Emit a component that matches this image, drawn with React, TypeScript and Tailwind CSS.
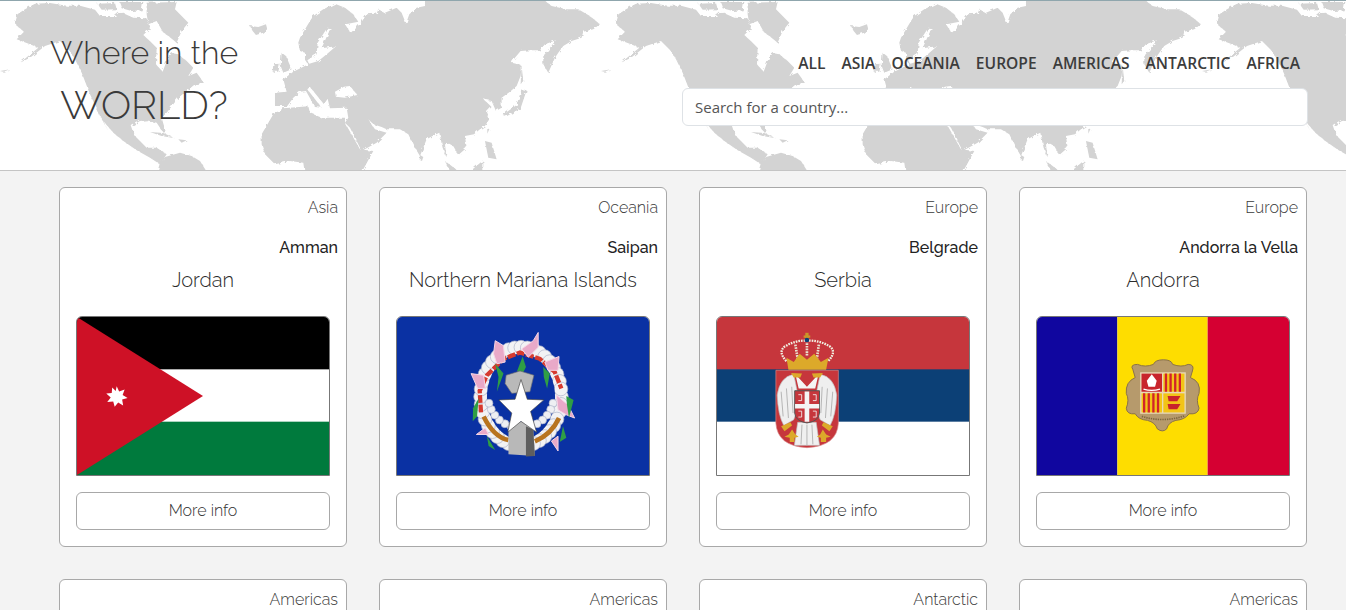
const NAV = ["ALL", "ASIA", "OCEANIA", "EUROPE", "AMERICAS", "ANTARCTIC", "AFRICA"];

const THIN = "font-['Raleway','Inter','Lato',sans-serif] font-light";

const WorldMap = () => (
  <svg className="absolute inset-0 h-full w-full" aria-hidden="true">
    <defs>
      {/* roughens the coastlines a little */}
      <filter id="coast" filterUnits="userSpaceOnUse" x="0" y="0" width="1803" height="516">
        <feTurbulence type="fractalNoise" baseFrequency="0.09" numOctaves="2" seed="4" />
        <feDisplacementMap in="SourceGraphic" scale="12" />
      </filter>
      <pattern id="tile" width="601" height="172" patternUnits="userSpaceOnUse">
        <g fill="#d3d3d3" transform="scale(0.3333)" filter="url(#coast)">
          {/* north america */}
          <path d="M52,40 L75,25 L105,8 L150,6 L200,14 L240,14 L285,26 L300,45 L345,45 L360,32 L400,50 L440,52 L450,82 L430,102 L452,122 L470,140 L468,190 L488,212 L500,180 L510,155 L535,160 L560,180 L580,200 L565,225 L590,215 L612,245 L585,250 L560,270 L535,290 L520,310 L500,335 L485,350 L498,395 L488,392 L470,365 L440,358 L420,360 L395,375 L405,405 L420,420 L440,440 L470,440 L500,460 L480,490 L450,470 L410,448 L370,420 L340,395 L310,360 L325,390 L300,345 L270,280 L245,215 L225,175 L210,150 L180,120 L135,135 L90,170 L60,185 L115,140 L90,130 L50,115 L72,92 L45,70 Z" />
          <path d="M440,5 L530,3 L525,25 L565,65 L545,90 L530,125 L505,105 L490,95 L470,60 L445,70 L440,40 Z" />
          <path d="M292,8 L345,6 L350,25 L305,26 Z" />
          <path d="M358,3 L430,3 L425,28 L395,30 L365,22 Z" />
          <path d="M0,210 L30,205 L10,212 Z" />
          {/* south america, caribbean */}
          <path d="M470,520 L480,485 L495,468 L540,455 L575,465 L600,480 L625,520 Z" />
          <path d="M450,393 L490,396 L525,412 L485,405 Z" />
          <path d="M535,415 L560,418 L545,425 Z" />
          {/* iceland */}
          <path d="M750,75 L775,78 L798,70 L802,85 L785,97 L768,102 L758,90 Z" />
          <g transform="translate(750,0)">
            {/* eurasia */}
            <path d="M145,125 L150,110 L180,60 L190,45 L220,25 L255,8 L285,20 L310,40 L325,62 L295,68 L285,70 L302,95 L318,82 L335,62 L350,40 L380,38 L385,25 L405,35 L440,20 L455,35 L468,68 L478,40 L500,20 L525,15 L525,-5 L880,-5 L905,15 L950,25 L985,25 L1020,45 L1050,70 L1030,85 L1000,92 L995,110 L965,120 L940,135 L925,155 L915,170 L895,215 L880,190 L880,165 L900,140 L918,118 L885,130 L870,148 L840,148 L812,150 L795,170 L785,185 L805,190 L815,195 L812,225 L800,255 L780,272 L755,290 L755,320 L738,330 L725,300 L700,295 L712,305 L722,315 L708,330 L718,355 L705,375 L690,385 L672,400 L645,405 L650,440 L625,462 L610,435 L598,428 L585,430 L590,470 L578,440 L568,395 L548,405 L530,415 L510,465 L495,440 L475,400 L450,385 L410,385 L395,378 L370,370 L355,355 L375,385 L410,395 L380,425 L335,450 L300,380 L285,365 L295,350 L290,320 L240,322 L233,293 L222,310 L180,258 L172,265 L215,320 L195,318 L168,270 L150,272 L130,290 L112,315 L75,315 L75,275 L110,272 L100,235 L130,212 L175,190 L165,175 L165,155 L150,150 Z" />
            {/* africa */}
            <path d="M35,400 L70,340 L100,322 L175,316 L180,335 L215,350 L285,350 L285,365 L330,445 L370,450 L340,505 L335,520 L165,520 L160,485 L120,480 L75,490 L45,460 L35,430 Z" />
            {/* uk */}
            <path d="M95,155 L108,165 L125,205 L100,215 L92,195 Z" />
            <path d="M70,190 L90,188 L85,212 L68,212 Z" />
            {/* japan, islands */}
            <path d="M758,342 L800,312 L815,265 L830,268 L812,322 L770,346 Z" />
            <path d="M585,480 L625,510 L605,520 Z" />
            <path d="M650,520 L700,478 L700,520 Z" />
            <path d="M705,420 L725,425 L740,475 L715,470 Z" />
            <path d="M510,462 L520,468 L516,480 L509,476 Z" />
            <path d="M712,382 L718,385 L712,398 Z" />
            <path d="M815,195 L820,240 L812,250 Z" />
            {/* seas */}
            <g fill="#fff">
              <path d="M255,272 L282,257 L300,255 L322,282 L285,290 L258,287 Z" />
              <path d="M232,80 L242,82 L222,125 L215,142 L258,136 L232,158 L205,180 L178,188 L172,178 L200,160 L203,125 Z" />
            </g>
          </g>
        </g>
      </pattern>
    </defs>
    <rect width="100%" height="100%" fill="url(#tile)" />
  </svg>
);

const Jordan = () => (
  <svg viewBox="0 0 254 160" preserveAspectRatio="none" className="block h-full w-full">
    <rect width="254" height="54" fill="#000" />
    <rect y="53" width="254" height="54" fill="#fff" />
    <rect y="106" width="254" height="54" fill="#007a3d" />
    <path d="M0,0 L127,80 L0,160 Z" fill="#ce1126" />
    <path
      d="M40,70 L42.500,75.500 L48,73.500 L46,79 L51,82 L45.500,83.500 L46.500,89.500 L41.500,86.500 L38,91 L36.500,85.500 L30.500,86 L34,81.500 L29.500,77.500 L35,77 L35.500,71.500 L39,75 Z"
      fill="#fff"
    />
  </svg>
);

const Mariana = () => {
  const outer = Array.from({ length: 40 }, (_, i) => (i * Math.PI * 2) / 40);
  const lower = Array.from({ length: 14 }, (_, i) => Math.PI * (0.08 + (i * 0.84) / 13));
  return (
    <svg viewBox="0 0 254 160" preserveAspectRatio="none" className="block h-full w-full">
      <rect width="254" height="160" fill="#0a31a3" />
      <g transform="translate(44,4) scale(0.3333)">
        {outer.map((a, i) => (
          <circle
            key={i}
            cx={243 + 122 * Math.cos(a)}
            cy={230 + 150 * Math.sin(a)}
            r="21"
            fill="#f2f2f4"
            stroke="#a9b0c8"
            strokeWidth="2"
          />
        ))}
        <ellipse cx="243" cy="230" rx="103" ry="130" fill="#0a31a3" />
        <path d="M122,278 L118,212 L140,165 L190,115 L240,96 L300,115 L345,155 L365,205" fill="none" stroke="#d63a2f" strokeWidth="13" strokeDasharray="24 5" />
        <path d="M130,290 Q160,352 205,362" fill="none" stroke="#b8741f" strokeWidth="14" />
        <path d="M285,366 Q335,345 358,295" fill="none" stroke="#b8741f" strokeWidth="14" />
        {lower.map((a, i) => (
          <circle
            key={i}
            cx={243 + 100 * Math.cos(a)}
            cy={225 + 100 * Math.sin(a)}
            r="12"
            fill="#eeeff3"
            stroke="#a9b0c8"
            strokeWidth="2"
          />
        ))}
        <g fill="#e9a9c8" stroke="#f6d7e6" strokeWidth="3">
          <path d="M165,60 L190,75 L195,125 L170,130 L160,100 Z" />
          <path d="M295,35 L295,80 L265,110 L245,85 L280,60 Z" />
          <path d="M358,108 L355,150 L325,150 L315,125 Z" />
          <path d="M92,160 L130,165 L135,205 L112,205 Z" />
          <path d="M350,225 L385,255 L405,295 L380,285 L355,270 Z" />
          <path d="M108,345 L135,325 L145,345 Z" />
          <path d="M335,365 L355,350 L355,395 Z" />
        </g>
        <g fill="#2f9e45">
          <path d="M165,130 L190,160 L170,215 L175,170 Z" />
          <path d="M248,108 L258,140 L240,175 L232,150 Z" />
          <path d="M310,140 L330,160 L322,205 L312,170 Z" />
          <path d="M115,235 L110,290 L97,305 L98,265 Z" />
          <path d="M380,228 L402,240 L388,295 L382,255 Z" />
          <path d="M140,350 L165,392 L145,380 Z" />
          <path d="M370,320 L380,355 L360,368 Z" />
        </g>
        <path d="M198,165 L240,152 L282,165 L270,215 L215,220 L195,190 Z" fill="#b9b9b9" stroke="#6f6f6f" strokeWidth="2" />
        <path d="M205,320 L245,305 L280,330 L285,410 L205,405 Z" fill="#b8b8b8" />
        <path d="M258,320 L280,330 L285,410 L258,412 Z" fill="#5e5e5e" />
        <path
          d="M243,178 L262,238 L312,240 L272,275 L290,338 L243,305 L203,338 L215,280 L176,240 L225,238 Z"
          fill="#fff"
          stroke="#444"
          strokeWidth="2"
        />
      </g>
    </svg>
  );
};

const Serbia = () => (
  <svg viewBox="0 0 254 160" preserveAspectRatio="none" className="block h-full w-full">
    <rect width="254" height="54" fill="#c6363c" />
    <rect y="53" width="254" height="54" fill="#0c4076" />
    <rect y="106" width="254" height="54" fill="#fff" />
    <g transform="translate(44,4) scale(0.3333)">
      {/* crown */}
      <path d="M62,92 Q95,58 140,60 Q190,58 220,92 L205,125 L78,125 Z" fill="#c6363c" />
      <path d="M78,122 Q52,95 72,78 Q105,58 140,60 Q178,58 210,78 Q230,95 204,122" fill="none" stroke="#f1eee0" strokeWidth="7" strokeDasharray="5 3" />
      <path d="M105,72 L112,115 M140,60 L140,105 M176,72 L170,115" stroke="#e8e2cf" strokeWidth="8" strokeDasharray="5 3" />
      <path d="M78,112 L100,125 L118,100 L140,118 L162,100 L182,125 L205,112 L198,148 L84,148 Z" fill="#dca92a" />
      <rect x="135" y="36" width="10" height="24" fill="#c9962a" />
      <rect x="130" y="44" width="20" height="7" fill="#c9962a" />
      <circle cx="140" cy="58" r="7" fill="#0c4076" />
      <path d="M46,150 L235,150 L235,310 Q232,380 140,385 Q50,380 46,310 Z" fill="#c6363c" stroke="#d98a8a" strokeWidth="2" />
      {/* eagle */}
      <path d="M100,162 Q58,170 50,225 Q52,285 70,318 L100,300 L118,250 Z" fill="#efefef" stroke="#bcbcbc" strokeWidth="2" />
      <path d="M180,162 Q222,170 230,225 Q228,285 210,318 L180,300 L162,250 Z" fill="#efefef" stroke="#bcbcbc" strokeWidth="2" />
      <path d="M62,215 L68,290 M78,205 L84,295 M94,200 L98,280 M218,215 L212,290 M202,205 L196,295 M186,200 L182,280" stroke="#b5b5b5" strokeWidth="3" />
      <path d="M105,162 L140,200 L175,162 L165,205 L115,205 Z" fill="#f5f5f5" />
      <path d="M92,158 L125,160 L120,172 L100,172 Z" fill="#dca92a" />
      <path d="M188,158 L155,160 L160,172 L180,172 Z" fill="#dca92a" />
      <path d="M112,308 L168,308 L178,378 L102,378 Z" fill="#f0f0f0" stroke="#bcbcbc" strokeWidth="2" />
      <path d="M125,315 L122,375 M140,315 L140,378 M155,315 L158,375" stroke="#b5b5b5" strokeWidth="3" />
      <path d="M103,212 L178,212 L178,280 Q176,305 140,310 Q105,305 103,280 Z" fill="#c6363c" stroke="#555" strokeWidth="3" />
      <path d="M133,214 L147,214 L147,252 L177,252 L177,266 L147,266 L147,306 L133,306 L133,266 L104,266 L104,252 L133,252 Z" fill="#f4f4f4" />
      <g fill="none" stroke="#f4f4f4" strokeWidth="2.500">
        <path d="M114,224 h10 v18 h-10 M158,224 h10 v18 h-10 M114,274 h10 v18 h-10 M158,274 h10 v18 h-10" />
      </g>
      <g fill="#dca92a">
        <path d="M95,330 L105,345 L115,352 L102,355 L102,368 L88,368 L88,355 L72,352 L85,345 Z" />
        <path d="M188,330 L198,345 L212,352 L198,355 L198,368 L182,368 L182,355 L170,352 L180,345 Z" />
        <path d="M62,320 L90,308 L95,318 L72,335 Z" />
        <path d="M218,320 L190,308 L185,318 L208,335 Z" />
      </g>
    </g>
  </svg>
);

const Andorra = () => (
  <svg viewBox="0 0 254 160" preserveAspectRatio="none" className="block h-full w-full">
    <rect width="81" height="160" fill="#10069f" />
    <rect x="81" width="91" height="160" fill="#fedd00" />
    <rect x="172" width="82" height="160" fill="#d50032" />
    <g transform="translate(64,24) scale(0.3333)">
      <path
        d="M98,88 Q88,72 112,72 Q135,82 160,72 Q165,58 190,58 Q215,58 218,72 Q245,82 265,72 Q285,72 278,92 L272,112 Q305,125 298,160 Q288,180 298,205 Q295,225 268,222 Q255,240 228,242 Q205,248 200,268 Q188,280 172,268 Q165,248 142,242 Q115,240 105,222 Q80,225 78,205 Q88,180 78,160 Q75,125 105,112 Z"
        fill="#b69a6c"
        stroke="#8a7148"
        strokeWidth="3"
      />
      <rect x="120" y="96" width="138" height="126" fill="#e8d9b8" />
      <rect x="124" y="100" width="62" height="55" fill="#c8242c" />
      <path d="M155,102 L170,122 L165,140 L145,140 L140,122 Z" fill="#fff" />
      <path d="M130,147 Q155,155 180,147" fill="none" stroke="#fff" strokeWidth="4" />
      <rect x="190" y="100" width="64" height="55" fill="#f2c417" />
      <path d="M198,100 V155 M212,100 V155 M226,100 V155 M240,100 V155" stroke="#d2232a" strokeWidth="7" />
      <rect x="124" y="160" width="62" height="58" fill="#f2c417" />
      <path d="M132,160 V218 M146,160 V218 M160,160 V218 M174,160 V218" stroke="#d2232a" strokeWidth="7" />
      <rect x="190" y="160" width="64" height="58" fill="#f2c417" />
      <path d="M203,168 H242 L232,184 H206 Z M203,192 H242 L232,208 H206 Z" fill="#c8242c" />
      <path d="M125,230 Q190,250 255,228" fill="none" stroke="#7d6640" strokeWidth="5" strokeDasharray="4 3" />
    </g>
  </svg>
);

const CARDS = [
  { region: "Asia", capital: "Amman", name: "Jordan", flag: <Jordan /> },
  { region: "Oceania", capital: "Saipan", name: "Northern Mariana Islands", flag: <Mariana /> },
  { region: "Europe", capital: "Belgrade", name: "Serbia", flag: <Serbia /> },
  { region: "Europe", capital: "Andorra la Vella", name: "Andorra", flag: <Andorra /> },
];

const NEXT_REGIONS = ["Americas", "Americas", "Antarctic", "Americas"];

const App = () => {
  return (
    <div className="h-screen overflow-hidden bg-[#f3f3f3]">
      <header className="relative h-[171px] border-t border-b border-t-[#8fa6ad] border-b-[#c4c4c4] bg-white">
        <WorldMap />
        <div className="relative flex items-start justify-between pr-[38px]">
          <div className={`w-[288px] pt-[30px] text-center text-[#3a3a3a] ${THIN}`}>
            <h1 className="text-[32px] leading-[44px]">Where in the</h1>
            <h2 className="mt-[3px] text-[40px] leading-[54px]">WORLD?</h2>
          </div>
          <div className="w-[626px] pt-[50px] font-['Open_Sans',sans-serif]">
            <nav className="flex justify-end gap-4 pr-2 text-[15.6px] leading-6 font-semibold text-[#3c3c3c]">
              {NAV.map((item) => (
                <span key={item}>{item}</span>
              ))}
            </nav>
            <div className="mt-[13px] flex h-[38px] items-center rounded-md border border-[#dee2e6] bg-white px-3 text-[15px] text-[#555]">
              Search for a country...
            </div>
          </div>
        </div>
      </header>

      <main className="ml-[59px] grid w-[1248px] grid-cols-4 gap-x-8 gap-y-8 pt-4">
        {CARDS.map((c) => (
          <div key={c.name} className={`flex h-[360px] flex-col rounded-md border border-[#a8a8a8] bg-white ${THIN}`}>
            <div className="px-2 pt-2 text-right text-base leading-6 text-[#3a3a3a]">{c.region}</div>
            <div className="px-2 pt-4 text-right text-base leading-6 font-medium text-[#222]">{c.capital}</div>
            <div className="pt-[5px] text-center text-xl leading-[30px] text-[#2b2b2b]">{c.name}</div>
            <div className="mx-4 mt-[21px] h-[160px] overflow-hidden rounded-t-md border border-[#777]">{c.flag}</div>
            <button className="mx-4 mt-4 h-[38px] rounded-md border border-[#a8a8a8] bg-white text-base text-[#333]">
              More info
            </button>
          </div>
        ))}
        {NEXT_REGIONS.map((region, i) => (
          <div key={i} className={`h-[360px] rounded-md border border-[#a8a8a8] bg-white ${THIN}`}>
            <div className="px-2 pt-2 text-right text-base leading-6 text-[#3a3a3a]">{region}</div>
          </div>
        ))}
      </main>
    </div>
  );
};

export default App;
